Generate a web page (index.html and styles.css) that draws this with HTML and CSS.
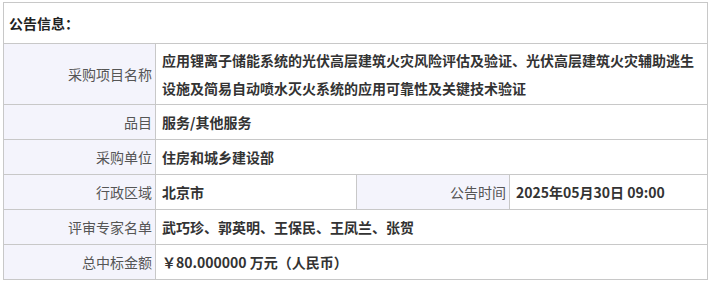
FILE: index.html
```html
<!DOCTYPE html>
<html lang="zh-CN">
<head>
<meta charset="utf-8">
<link rel="stylesheet" href="styles.css">
</head>
<body>
<div class="wrap">
<table class="info">
<colgroup>
<col class="c1"><col class="c2"><col class="c3"><col class="c4">
</colgroup>
<tr><td class="head" colspan="4">公告信息：</td></tr>
<tr><td class="lbl">采购项目名称</td><td class="val" colspan="3">应用锂离子储能系统的光伏高层建筑火灾风险评估及验证、光伏高层建筑火灾辅助逃生设施及简易自动喷水灭火系统的应用可靠性及关键技术验证</td></tr>
<tr><td class="lbl">品目</td><td class="val" colspan="3">服务/其他服务</td></tr>
<tr><td class="lbl">采购单位</td><td class="val" colspan="3">住房和城乡建设部</td></tr>
<tr><td class="lbl">行政区域</td><td class="val">北京市</td><td class="lbl">公告时间</td><td class="val">2025年05月30日 09:00</td></tr>
<tr><td class="lbl">评审专家名单</td><td class="val" colspan="3">武巧珍、郭英明、王保民、王凤兰、张贺</td></tr>
<tr><td class="lbl">总中标金额</td><td class="val" colspan="3">￥80.000000 万元（人民币）</td></tr>
</table>
</div>
</body>
</html>
```
FILE: styles.css
```css
html, body {
  margin: 0;
  padding: 0;
  background: #fff;
}
.wrap {
  padding: 2px 3px 0 3px;
}
.info {
  width: 704px;
  border-collapse: collapse;
  table-layout: fixed;
  font-family: "Noto Sans CJK SC", "Microsoft YaHei", sans-serif;
  font-size: 14px;
  color: #333;
}
.c1 { width: 152px; }
.c2 { width: 201px; }
.c3 { width: 153px; }
.c4 { width: 198px; }
.info td {
  border: 1px solid #c8c8c8;
  line-height: 28px;
  padding: 2px 2px 2px 6px;
  height: 30px;
  vertical-align: middle;
}
.info td.head {
  height: 36px;
  font-weight: bold;
  padding-left: 5px;
  color: #222;
}
.info td.lbl {
  background: #f4f4fc;
  text-align: right;
  color: #555;
  padding-right: 3px;
}
.info td.val {
  font-weight: bold;
}
```
